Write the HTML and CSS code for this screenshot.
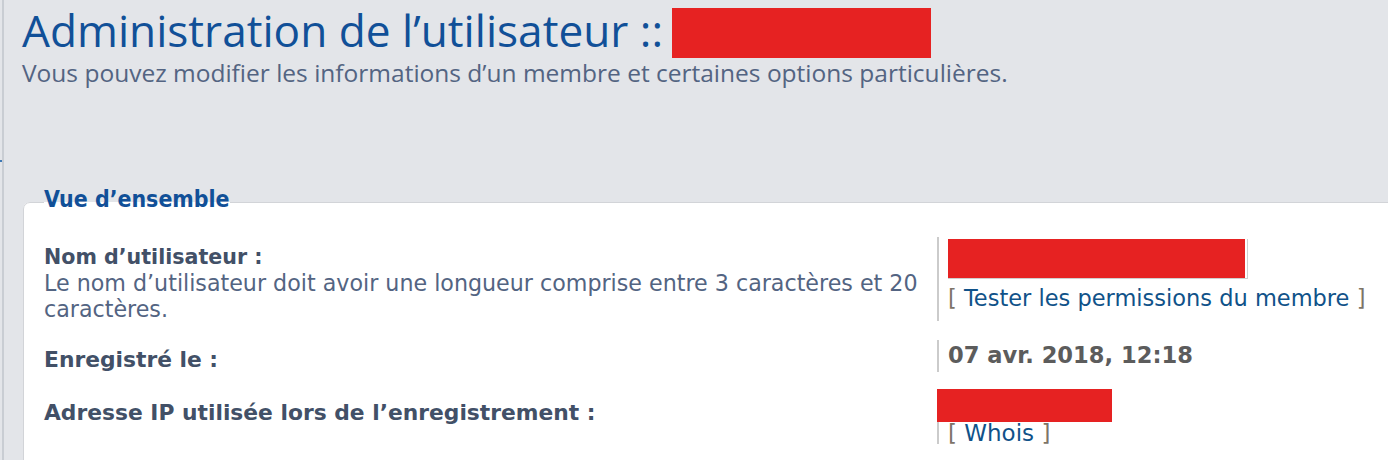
FILE: index.html
```html
<!DOCTYPE html>
<html lang="fr">
<head>
<meta charset="utf-8">
<title>Administration de l’utilisateur</title>
<link rel="stylesheet" href="styles.css">
</head>
<body>
<div class="page">
  <span class="tab-mark"></span>
  <div class="main">
    <h1 class="title">Administration de l’utilisateur :: <span class="redact redact-title"></span></h1>
    <p class="intro">Vous pouvez modifier les informations d’un membre et certaines options particulières.</p>

    <fieldset class="panel">
      <legend class="panel-legend">Vue d’ensemble</legend>

      <dl class="row row-name">
        <dt class="row-label">
          <span class="label label-name">Nom d’utilisateur :</span><br>
          <span class="explain">Le nom d’utilisateur doit avoir une longueur comprise entre 3 caractères et 20 caractères.</span>
        </dt>
        <dd class="row-value">
          <div class="input-box"><span class="redact redact-input"></span></div>
          <div class="link-line"><span class="bracket">[</span> <a class="link" href="#">Tester les permissions du membre</a> <span class="bracket">]</span></div>
        </dd>
      </dl>

      <dl class="row row-date">
        <dt class="row-label"><span class="label">Enregistré le :</span></dt>
        <dd class="row-value"><strong class="date">07 avr. 2018, 12:18</strong></dd>
      </dl>

      <dl class="row row-ip">
        <dt class="row-label"><span class="label">Adresse IP utilisée lors de l’enregistrement :</span></dt>
        <dd class="row-value">
          <span class="redact redact-ip"></span>
          <div class="link-line whois-line"><span class="bracket">[</span> <a class="link" href="#">Whois</a> <span class="bracket">]</span></div>
        </dd>
      </dl>
    </fieldset>
  </div>
</div>
</body>
</html>
```

FILE: styles.css
```css
html, body {
  margin: 0;
  padding: 0;
}

body {
  background: #e3e5e9;
  font-family: "DejaVu Sans", Verdana, sans-serif;
  overflow: hidden;
}

.page {
  position: relative;
  padding-left: 2px;
  height: 460px;
  overflow: hidden;
  box-sizing: border-box;
}

.tab-mark {
  position: absolute;
  left: 0;
  top: 160px;
  width: 2px;
  height: 2px;
  background: #3d78b4;
}

.main {
  border-left: 2px solid #c9cdd3;
  min-height: 460px;
  padding: 4px 0 0 18px;
}

.title {
  margin: 0;
  font-family: "Open Sans", "Liberation Sans", sans-serif;
  font-weight: normal;
  font-size: 44.2px;
  line-height: 53px;
  height: 53px;
  color: #115098;
  display: flex;
  align-items: flex-start;
  white-space: nowrap;
}

.redact {
  display: block;
  background: #e62222;
}

.redact-title {
  display: inline-block;
  flex: 0 0 259px;
  height: 50px;
  margin: 4px 0 0 9px;
}

.intro {
  margin: 0;
  font-family: "Open Sans", "Liberation Sans", sans-serif;
  font-size: 24.5px;
  line-height: 32px;
  color: #536482;
  white-space: nowrap;
}

.panel {
  margin: 97px -40px 0 1px;
  padding: 19px 0 0 20px;
  border: 1px solid #d2d4d8;
  border-radius: 7px;
  background: #ffffff;
  min-height: 300px;
}

.panel-legend {
  padding: 0 0 6px 0;
  font-family: "DejaVu Sans Condensed", "DejaVu Sans", sans-serif;
  font-weight: bold;
  font-size: 22.9px;
  line-height: 26px;
  color: #115098;
}

.row {
  display: flex;
  align-items: flex-start;
  margin: 0 0 18px 0;
}

.row-date {
  margin-bottom: 20px;
}

.row-label {
  flex: 0 0 893px;
  padding-top: 6px;
  font-size: 22.5px;
  line-height: 26px;
}

.label {
  font-weight: bold;
  font-size: 21.8px;
  color: #425067;
}

.label-name {
  font-size: 20.6px;
}

.explain {
  color: #536482;
  font-size: 22.2px;
}

.row-value {
  margin: 0;
  border-left: 2px solid #cbcbcb;
  padding: 2px 0 0 9px;
  font-size: 22.5px;
  line-height: 26px;
  white-space: nowrap;
}

.row-name .row-value {
  padding-bottom: 10px;
}

.input-box {
  width: 299px;
  height: 39px;
  border: 1px solid #cfcfcf;
  border-top: 0;
  border-left: 0;
  box-sizing: content-box;
}

.redact-input {
  width: 297px;
  height: 39px;
}

.link-line {
  margin-top: 6px;
  color: #7a7a7a;
}

.link {
  color: #105289;
  text-decoration: none;
}

.bracket {
  color: #7d7468;
}

.row-date .row-value {
  padding-bottom: 4px;
}

.date {
  font-size: 22.6px;
  color: #5c5c5c;
}

.row-ip .row-value {
  padding-top: 0;
}

.redact-ip {
  width: 175px;
  height: 33px;
  margin: -4px 0 0 -11px;
}

.whois-line {
  margin-top: 0;
  line-height: 22px;
  font-size: 23px;
}
```
